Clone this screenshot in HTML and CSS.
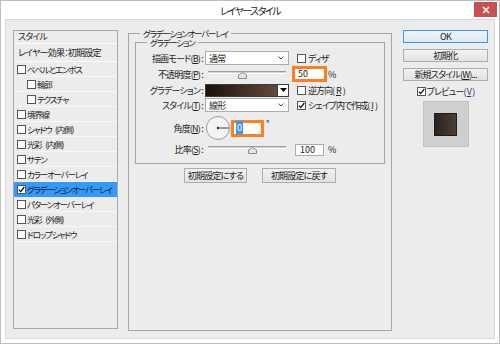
FILE: index.html
```html
<!DOCTYPE html>
<html lang="ja">
<head>
    <meta charset="UTF-8">
    <title>レイヤースタイル</title>
    <link rel="stylesheet" href="styles.css">
</head>
<body>
    <div class="window">
        <div class="titlebar">
            <span></span>
            <span class="title">レイヤースタイル</span>
            <span class="close-btn"><svg width="8" height="8" viewBox="0 0 8 8"><path d="M1 1l6 6M7 1l-6 6" stroke="#fff" stroke-width="1.5"/></svg></span>
        </div>
        <div class="client">
            <!-- effect list -->
            <div class="style-list">
                <div class="list-head">スタイル</div>
                <div class="list-head sub">レイヤー効果：初期設定</div>
                <div class="item"><span class="cb"></span>ベベルとエンボス</div>
                <div class="item indent"><span class="cb"></span>輪郭</div>
                <div class="item indent"><span class="cb"></span>テクスチャ</div>
                <div class="item"><span class="cb"></span>境界線</div>
                <div class="item"><span class="cb"></span>シャドウ (内側)</div>
                <div class="item"><span class="cb"></span>光彩 (内側)</div>
                <div class="item"><span class="cb"></span>サテン</div>
                <div class="item"><span class="cb"></span>カラーオーバーレイ</div>
                <div class="item selected"><span class="cb"><svg width="7" height="7" viewBox="0 0 7 7"><path d="M0.8 3.6l1.9 2L6.3 1" fill="none" stroke="#111" stroke-width="1.3"/></svg></span>グラデーションオーバーレイ</div>
                <div class="item"><span class="cb"></span>パターンオーバーレイ</div>
                <div class="item"><span class="cb"></span>光彩 (外側)</div>
                <div class="item"><span class="cb"></span>ドロップシャドウ</div>
            </div>

            <!-- settings -->
            <fieldset class="group">
                <legend>グラデーションオーバーレイ</legend>
                <fieldset class="group inner">
                    <legend>グラデーション</legend>
                    <div class="row">
                        <span class="label">描画モード(<u>B</u>) :</span>
                        <span class="select">通常<svg width="6" height="4" viewBox="0 0 6 4"><path d="M0.5 0.5l2.5 2.5 2.5-2.5" fill="none" stroke="#444"/></svg></span>
                        <span class="opt"><span class="cb"></span>ディザ</span>
                    </div>
                    <div class="row r-opacity">
                        <span class="label">不透明度(<u>P</u>) :</span>
                        <span class="slider"><span class="track"></span><svg class="thumb" style="left: 33px" width="9" height="7" viewBox="0 0 9 7"><path d="M0.5 6.5V3L4.5 0.5 8.5 3v3.5z" fill="#e6e6e6" stroke="#8a8a8a"/></svg></span>
                        <span class="field hl">50</span>
                        <span class="unit tight">%</span>
                    </div>
                    <div class="row">
                        <span class="label">グラデーション :</span>
                        <span class="grad-pick"><span class="swatch"></span><span class="arrow"><svg width="7" height="4" viewBox="0 0 7 4"><path d="M0 0h7L3.5 4z" fill="#000"/></svg></span></span>
                        <span class="opt"><span class="cb"></span>逆方向(<u>R</u>)</span>
                    </div>
                    <div class="row">
                        <span class="label">スタイル(<u>T</u>) :</span>
                        <span class="select">線形<svg width="6" height="4" viewBox="0 0 6 4"><path d="M0.5 0.5l2.5 2.5 2.5-2.5" fill="none" stroke="#444"/></svg></span>
                        <span class="opt"><span class="cb"><svg width="7" height="7" viewBox="0 0 7 7"><path d="M0.8 3.6l1.9 2L6.3 1" fill="none" stroke="#111" stroke-width="1.3"/></svg></span>シェイプ内で作成(<u>I</u>)</span>
                    </div>
                    <div class="row r-angle">
                        <span class="label">角度(<u>N</u>) :</span>
                        <svg class="dial" width="24" height="24" viewBox="0 0 24 24"><circle cx="12" cy="12" r="11.5" fill="#f3f3f3" stroke="#9c9c9c"/><line x1="12" y1="12" x2="23" y2="12" stroke="#444"/><circle cx="12" cy="12" r="1.2" fill="#333"/></svg>
                        <span class="field hl angle"><span class="sel">0</span></span>
                        <span class="deg">°</span>
                    </div>
                    <div class="row r-scale">
                        <span class="label">比率(<u>S</u>) :</span>
                        <span class="slider"><span class="track"></span><svg class="thumb" style="left: 43px" width="9" height="7" viewBox="0 0 9 7"><path d="M0.5 6.5V3L4.5 0.5 8.5 3v3.5z" fill="#e6e6e6" stroke="#8a8a8a"/></svg></span>
                        <span class="field">100</span>
                        <span class="unit">%</span>
                    </div>
                </fieldset>
                <div class="btn-row">
                    <span class="btn w1">初期設定にする</span>
                    <span class="btn w2">初期設定に戻す</span>
                </div>
            </fieldset>

            <!-- dialog buttons -->
            <div class="side">
                <span class="btn default">OK</span>
                <span class="btn">初期化</span>
                <span class="btn">新規スタイル(<u>W</u>)...</span>
                <span class="preview-check"><span class="cb"><svg width="7" height="7" viewBox="0 0 7 7"><path d="M0.8 3.6l1.9 2L6.3 1" fill="none" stroke="#111" stroke-width="1.3"/></svg></span>プレビュー(<u class="key">V</u>)</span>
                <div class="preview"><span class="thumbnail"></span></div>
            </div>
        </div>
    </div>
</body>
</html>
```

FILE: styles.css
```css
* { margin: 0; padding: 0; box-sizing: border-box; }
body { font-family: "Noto Sans CJK JP", "Noto Sans", sans-serif; font-size: 9px; line-height: 11px; letter-spacing: -0.8px; color: #1c1c1c; background: #fff; font-feature-settings: "palt"; }
u { text-decoration: underline; text-underline-offset: 1px; }

.window { width: 500px; height: 344px; border: 1px solid #bdbdbd; background: #fff; display: flex; flex-direction: column; }
.titlebar { height: 18px; flex: none; display: grid; grid-template-columns: 1fr auto 1fr; align-items: start; }
.title { font-size: 10px; line-height: 19px; letter-spacing: -1.5px; color: #222; }
.close-btn { justify-self: end; width: 23px; height: 15px; margin: 1px 2px 0 0; background: #c75050; display: flex; align-items: center; justify-content: center; }

.client { flex: 1; margin: 0 4px 4px; border: 1px solid #d8d8d8; background: #ececec; display: flex; align-items: flex-start; padding: 10px 0 0 7px; }

/* left list */
.style-list { width: 105px; height: 299px; flex: none; border: 1px solid #a9a9a9; background: #ececec; overflow: hidden; }
.list-head { height: 13px; line-height: 12px; padding-left: 4px; border-bottom: 1px solid #fbfbfb; white-space: nowrap; }
.list-head.sub { height: 18px; line-height: 17px; }
.item { height: 15px; display: flex; align-items: center; gap: 1px; padding-left: 3px; border-bottom: 1px solid #f8f8f8; white-space: pre; font-size: 8.5px; letter-spacing: -1.2px; word-spacing: 3px; }
.item.indent { padding-left: 13px; }
.item.selected { background: #3399ff; border-bottom-color: #3399ff; }

.cb { width: 9px; height: 9px; flex: none; border: 1px solid #555; background: #fff; display: inline-flex; align-items: center; justify-content: center; }

/* group boxes */
.group { width: 264px; height: 302px; flex: none; margin: -1px 0 0 10px; border: 1px solid #a6a6a6; padding: 0 6px; min-inline-size: 0; }
.group legend { margin-left: 5px; padding: 0 3px; line-height: 9px; font-size: 8.5px; letter-spacing: -1.2px; }
.group.inner { width: 250px; height: 126px; margin: 0; padding: 4px 0 0 0; }
.group.inner legend { margin-left: 11px; }

.row { display: flex; align-items: center; height: 14px; white-space: nowrap; }
.r-opacity { height: 16px; margin-top: 1px; }
.row + .row { margin-top: 1px; }
.row.r-angle { height: 26px; margin-top: 3px; }
.row.r-scale { height: 13px; margin-top: 2px; }
.label { width: 69px; flex: none; text-align: right; padding-right: 2px; }

.select { width: 84px; height: 14px; border: 1px solid #acacac; background: #fff; display: flex; align-items: center; justify-content: space-between; padding: 0 4px 0 3px; }
.opt { margin-left: 8px; display: flex; align-items: center; gap: 2px; letter-spacing: -1px; }

.slider { position: relative; width: 84px; height: 100%; padding: 0 3px; }
.track { display: block; height: 3px; margin-top: 5px; border-top: 1px solid #9d9d9d; border-bottom: 1px solid #fff; background: #d4d4d4; }
.r-scale .track { margin-top: 3px; }
.thumb { position: absolute; top: 6px; }
.r-scale .thumb { top: 4px; }

.field { width: 29px; height: 12px; margin-left: 6px; border: 1px solid #acacac; background: #fff; padding-left: 4px; line-height: 10px; letter-spacing: 0; }
.field.hl { width: 35px; height: 16px; margin-left: 3px; border: 3px solid #ff7f1e; padding-left: 3px; line-height: 10px; }
.field.angle { width: 33px; height: 17px; margin-left: 1px; padding-left: 2px; }
.sel { background: #3399ff; color: #fff; padding: 0 1px; }
.unit { margin-left: 4px; }
.unit.tight { margin-left: 1px; }
.dial { margin-left: 1px; flex: none; }
.deg { align-self: flex-start; margin: 3px 0 0 2px; }

.grad-pick { width: 84px; height: 13px; display: flex; border: 1px solid #3a3a3a; }
.swatch { flex: 1; background: linear-gradient(to right, #1b110b, #3a2a20 45%, #604b3c); }
.arrow { width: 11px; border-left: 1px solid #3a3a3a; background: #fff; display: flex; align-items: center; justify-content: center; }

/* buttons */
.btn { height: 15px; display: flex; align-items: center; justify-content: center; border: 1px solid #adadad; background: linear-gradient(#f2f2f2, #e2e2e2); white-space: nowrap; }
.btn-row { display: flex; justify-content: center; gap: 15px; margin-top: 4px; }
.btn.w1 { width: 63px; }
.btn.w2 { width: 74px; }

.side { width: 85px; flex: none; margin-left: 11px; display: flex; flex-direction: column; gap: 6px; }
.side .btn { height: 13px; }
.btn.default { border-color: #3399ff; background: linear-gradient(#eef5fb, #dde9f4); }
.preview-check { align-self: center; display: flex; align-items: center; gap: 1px; height: 9px; }
.key { color: #1b3f9e; }
.preview { align-self: center; width: 46px; height: 46px; margin-top: -1px; border: 1px solid #c2c2c2; background: #cfcfcf; display: flex; align-items: center; justify-content: center; }
.thumbnail { width: 23px; height: 23px; border: 1px solid #1d1d1d; background: linear-gradient(to right, #2a221e, #3b302a 50%, #4d3f35); }
```
